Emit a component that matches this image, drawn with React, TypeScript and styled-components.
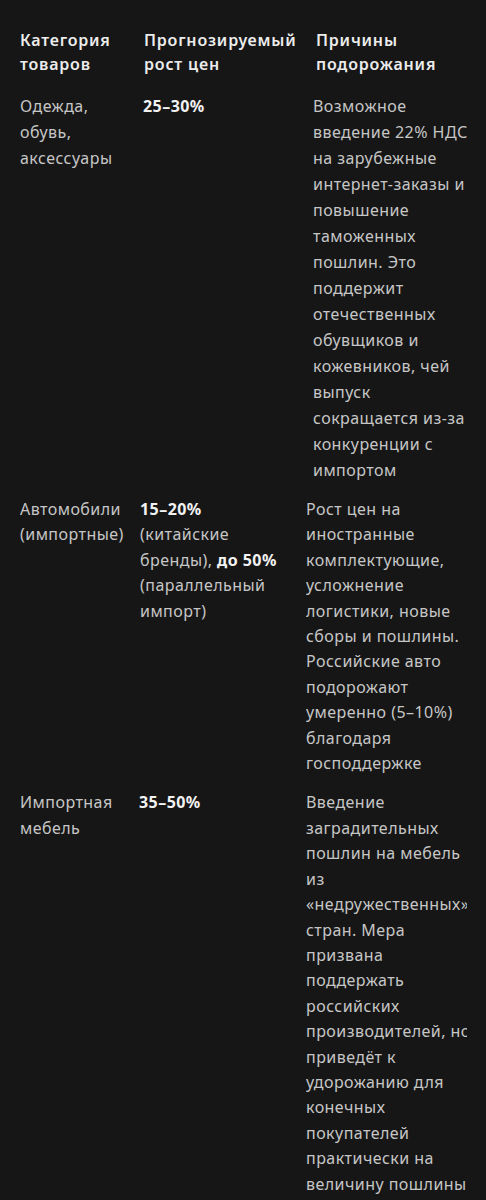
import styled, { createGlobalStyle } from 'styled-components';

const GlobalStyle = createGlobalStyle`
  html, body {
    margin: 0;
    padding: 0;
    background: #161616;
  }
  body {
    font-family: 'Noto Sans', 'Open Sans', sans-serif;
    -webkit-font-smoothing: antialiased;
  }
`;

type Row = {
  cols: string;
  lh: number;
  category: string;
  growth: React.ReactNode;
  reason: string;
};

const rows: Row[] = [
  {
    cols: '123px 170px 161px',
    lh: 26,
    category: 'Одежда, обувь, аксессуары',
    growth: <b>25–30%</b>,
    reason:
      'Возможное введение 22% НДС на зарубежные интернет-заказы и повышение таможенных пошлин. Это поддержит отечественных обувщиков и кожевников, чей выпуск сокращается из-за конкуренции с импортом',
  },
  {
    cols: '120px 166px 161px',
    lh: 25.4,
    category: 'Автомобили (импортные)',
    growth: (
      <>
        <b>15–20%</b> (китайские бренды), <b>до 50%</b> (параллельный импорт)
      </>
    ),
    reason:
      'Рост цен на иностранные комплектующие, усложнение логистики, новые сборы и пошлины. Российские авто подорожают умеренно (5–10%) благодаря господдержке',
  },
  {
    cols: '119px 167px 161px',
    lh: 25.4,
    category: 'Импортная мебель',
    growth: <b>35–50%</b>,
    reason:
      'Введение заградительных пошлин на мебель из «недружественных» стран. Мера призвана поддержать российских производителей,\u00a0но приведёт к удорожанию для конечных покупателей практически на величину пошлины',
  },
];

export default function App() {
  return (
    <>
      <GlobalStyle />
      <Table>
        <HeadRow $cols="124px 172px 160px">
          <HeadCell>Категория товаров</HeadCell>
          <HeadCell>Прогнозируемый рост цен</HeadCell>
          <HeadCell>Причины подорожания</HeadCell>
        </HeadRow>
        {rows.map((r) => (
          <BodyRow key={r.category} $cols={r.cols} $lh={r.lh}>
            <Cell>{r.category}</Cell>
            <Cell>{r.growth}</Cell>
            <ReasonCell>
              <ReasonText>{r.reason}</ReasonText>
            </ReasonCell>
          </BodyRow>
        ))}
      </Table>
    </>
  );
}

const Table = styled.div`
  width: 446px;
  padding: 20px 20px 0;
  overflow: hidden;
  display: flex;
  flex-direction: column;
`;

const HeadRow = styled.div<{ $cols: string }>`
  display: grid;
  grid-template-columns: ${(p) => p.$cols};
  padding: 8px 0 9px;
`;

const HeadCell = styled.div`
  padding-right: 8px;
  font-size: 16px;
  font-weight: 600;
  line-height: 24px;
  letter-spacing: 0.8px;
  color: #ececec;
`;

const BodyRow = styled.div<{ $cols: string; $lh: number }>`
  display: grid;
  grid-template-columns: ${(p) => p.$cols};
  padding: 8px 0 6px;
  font-size: 16px;
  line-height: ${(p) => p.$lh}px;
  letter-spacing: 0.45px;
  color: #c6c6c6;
`;

const Cell = styled.div`
  padding-right: 12px;
  b {
    font-weight: 700;
    color: #f2f2f2;
  }
`;

const ReasonCell = styled.div`
  width: 161px;
  overflow: hidden;
`;

const ReasonText = styled.div`
  width: 166px;
`;
